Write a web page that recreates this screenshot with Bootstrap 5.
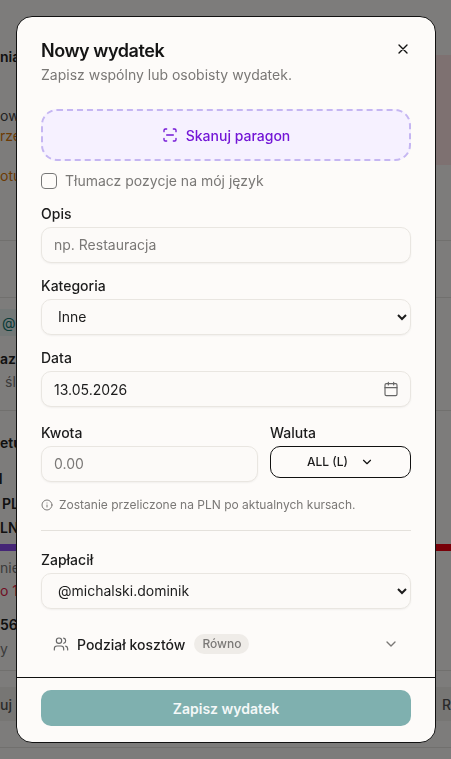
<!DOCTYPE html>
<html lang="pl">
<head>
<meta charset="utf-8">
<title>Nowy wydatek</title>
<link href="https://cdn.jsdelivr.net/npm/bootstrap@5.3.0/dist/css/bootstrap.min.css" rel="stylesheet">
<style>
html,body{height:100%;overflow:hidden}
body{font-family:Inter,"Liberation Sans",sans-serif;background:#fbf9f7;color:#1a1a1a;font-size:14px}
.pg{height:759px;overflow:hidden;font-size:14px;color:#444;background:linear-gradient(#fde3e3,#fde3e3) right 55px/16px 110px no-repeat}
.pg-row{display:flex;justify-content:space-between;align-items:center;white-space:nowrap}
.pg-row span{display:block}
.h-a{height:30px}.h-b{height:20px}.h-c{height:24px}.h-d{height:22px}.h-e{height:16px}
.s3{height:3px}.s4{height:4px}.s5{height:5px}.s6{height:6px}.s7{height:7px}.s10{height:10px}.s12{height:12px}.s14{height:14px}.s17{height:17px}.s20{height:20px}.s21{height:21px}.s26{height:26px}.s34{height:34px}.s41{height:41px}.s55{height:55px}.s57{height:57px}.s11{height:11px}
.edge{border-top:1px solid #e3e0dc}
.pg-orange{color:#d97706}
.pg-gray{color:#777}
.pg-chip{background:#e6f0ef;color:#0f766e;padding:3px 0 3px 2px}
.pg-strong{font-weight:600;color:#222}
.pg-bar{height:7px;background:linear-gradient(90deg,#8a4cec 0 50%,#f00010 50% 100%)}
.pg-red{color:#e11d48}
.pg-btn{background:#efece8;height:34px;font-weight:500;color:#555}
.in-n{margin-left:-8px}
.in-2{margin-left:2px}
.in-5{margin-left:5px}
.modal-backdrop{background:#000;opacity:.5}
.modal-dialog{margin:16px 0 0 16px;width:420px;max-width:420px;height:727px}
.modal-content{height:727px;background:#fdfbf9;border:1px solid #111;border-radius:16px;overflow:hidden}
.modal-header{display:block;border:0;padding:24px 24px 0;position:relative;height:92px;flex:none}
.modal-title{font-size:18px;font-weight:600;line-height:20px;color:#141414;letter-spacing:-.45px}
.nw-sub{font-size:14px;line-height:20px;color:#7a7876;margin-top:4px}
.nw-close{position:absolute;right:24px;top:24px;width:16px;height:16px;padding:0;border:0;background:none;display:flex}
.modal-body{padding:0 24px;overflow:hidden;flex:1}
.nw-scan{height:52px;border:2px dashed #c5b6f2;border-radius:16px;background:#f6f1ff;color:#7316d6;font-weight:500;font-size:14px;width:100%;gap:8px}
.nw-check{display:flex;align-items:center;gap:8px;margin-top:12px;height:16px}
.nw-check .form-check-input{width:16px;height:16px;margin:0;border:1px solid #777;border-radius:4px;background-color:transparent;flex:none}
.nw-check label{color:#7a7876;font-size:14px;line-height:16px}
.nw-label{display:block;font-size:14px;font-weight:500;line-height:14px;color:#1c1c1c;margin:0 0 6px}
.nw-f0{margin-top:18px}
.nw-f{margin-top:16px}
.nw-f2{margin-top:22px}
.nw-in,.nw-sel{height:36px;background-color:#fcfaf8;border:1px solid #e9e6e1;border-radius:10px;box-shadow:0 1px 2px rgba(0,0,0,.05);font-size:14px;color:#1c1c1c;padding:0 12px}
.nw-in::placeholder{color:#7a7876;opacity:1}
.nw-in:placeholder-shown{padding-bottom:1px}
.nw-sel{appearance:auto;-webkit-appearance:auto;background-image:none;padding:0 4px 2px 12px}
.nw-date{position:relative}
.nw-cal{position:absolute;right:12px;top:10px;pointer-events:none}
.nw-grid{display:grid;grid-template-columns:217px 141px;gap:12px;margin-top:18.5px}
.nw-cur{height:32px;width:100%;background:transparent;border:1px solid #111;border-radius:10px;font-size:12px;font-weight:500;color:#1c1c1c;gap:12px;padding:0}
.nw-info{font-size:12px;line-height:16px;color:#7a7876;gap:6px;margin-top:15.5px}
.nw-hr{border:0;border-top:1px solid #e4e1dc;opacity:1;margin:17px 0 0}
.nw-split{height:36px;padding:0 12px;margin-top:17px;font-weight:500;color:#1c1c1c;gap:8px}
.nw-pill{background:#efece8;color:#7a7876;font-size:12px;font-weight:500;line-height:16px;padding:2px 8px;border-radius:10px;margin-left:1px}
.modal-footer{border-top:1px solid #111;padding:12px 24px 16px;display:block;flex:none;height:65px}
.nw-save{display:block;margin:0;width:100%;height:36px;background:#7fb0af;border:0;border-radius:10px;color:#f4f8f8;font-size:14px;font-weight:600;padding:0}
</style>
</head>
<body>
<div class="pg" aria-hidden="true">
  <div class="s41"></div>
  <div class="pg-row h-a pg-strong"><span>nia</span></div>
  <div class="s34"></div>
  <div class="pg-row h-b"><span>ow</span></div>
  <div class="pg-row h-b pg-orange"><span>rze</span></div>
  <div class="s20"></div>
  <div class="pg-row h-b pg-orange"><span>otu</span></div>
  <div class="s55"></div>
  <div class="edge s57"></div>
  <div class="edge s14"></div>
  <div class="pg-row h-d"><span class="pg-chip">@</span></div>
  <div class="s10"></div>
  <div class="pg-row h-a pg-strong"><span>az</span></div>
  <div class="pg-row h-e pg-gray"><span class="in-5">śl</span></div>
  <div class="s21"></div>
  <div class="edge s20"></div>
  <div class="pg-row h-c pg-strong"><span>etu</span></div>
  <div class="s14"></div>
  <div class="pg-row h-b pg-strong"><span class="in-n">N</span></div>
  <div class="s5"></div>
  <div class="pg-row h-b pg-strong"><span class="in-2">PL</span></div>
  <div class="s4"></div>
  <div class="pg-row h-b pg-strong"><span>LN</span></div>
  <div class="s7"></div>
  <div class="pg-bar"></div>
  <div class="s6"></div>
  <div class="pg-row h-b pg-gray"><span>nie</span></div>
  <div class="s3"></div>
  <div class="pg-row h-b pg-red"><span>o 1</span></div>
  <div class="s14"></div>
  <div class="pg-row h-b pg-strong"><span>56</span></div>
  <div class="s4"></div>
  <div class="pg-row h-b pg-gray"><span>y</span></div>
  <div class="s12"></div>
  <div class="edge s17"></div>
  <div class="pg-row pg-btn"><span>uj</span><span>R</span></div>
  <div class="s26"></div>
  <div class="edge s11"></div>
</div>
<div class="modal-backdrop show"></div>
<div class="modal d-block" role="dialog">
  <div class="modal-dialog">
    <div class="modal-content">
      <div class="modal-header">
        <h5 class="modal-title">Nowy wydatek</h5>
        <div class="nw-sub">Zapisz wspólny lub osobisty wydatek.</div>
        <button class="nw-close" type="button" aria-label="Zamknij"><svg width="16" height="16" viewBox="0 0 24 24" fill="none" stroke="#111" stroke-width="2" stroke-linecap="round"><path d="M18 6 6 18M6 6l12 12"/></svg></button>
      </div>
      <div class="modal-body">
        <button type="button" class="nw-scan btn d-flex align-items-center justify-content-center">
          <svg width="16" height="16" viewBox="0 0 24 24" fill="none" stroke="#7316d6" stroke-width="2" stroke-linecap="round" stroke-linejoin="round"><path d="M3 7V5a2 2 0 0 1 2-2h2M17 3h2a2 2 0 0 1 2 2v2M21 17v2a2 2 0 0 1-2 2h-2M7 21H5a2 2 0 0 1-2-2v-2M7 12h10"/></svg>
          Skanuj paragon
        </button>
        <div class="nw-check">
          <input class="form-check-input" type="checkbox" id="tl">
          <label for="tl">Tłumacz pozycje na mój język</label>
        </div>
        <div class="nw-f0">
          <label class="nw-label">Opis</label>
          <input class="form-control nw-in" placeholder="np. Restauracja">
        </div>
        <div class="nw-f">
          <label class="nw-label">Kategoria</label>
          <select class="form-select nw-sel"><option>Inne</option></select>
        </div>
        <div class="nw-f">
          <label class="nw-label">Data</label>
          <div class="nw-date">
            <input class="form-control nw-in" value="13.05.2026">
            <svg class="nw-cal" width="16" height="16" viewBox="0 0 24 24" fill="none" stroke="#666" stroke-width="1.75" stroke-linecap="round" stroke-linejoin="round"><path d="M8 2v4M16 2v4"/><rect x="3" y="4" width="18" height="18" rx="2"/><path d="M3 10h18"/></svg>
          </div>
        </div>
        <div class="nw-grid">
          <div>
            <label class="nw-label">Kwota</label>
            <input class="form-control nw-in" placeholder="0.00">
          </div>
          <div>
            <label class="nw-label">Waluta</label>
            <button type="button" class="nw-cur btn d-flex align-items-center justify-content-center">ALL (L)
              <svg width="14" height="14" viewBox="0 0 24 24" fill="none" stroke="#111" stroke-width="2" stroke-linecap="round" stroke-linejoin="round"><path d="m6 9 6 6 6-6"/></svg>
            </button>
          </div>
        </div>
        <div class="nw-info d-flex align-items-center">
          <svg width="12" height="12" viewBox="0 0 24 24" fill="none" stroke="#7a7876" stroke-width="2" stroke-linecap="round"><circle cx="12" cy="12" r="10"/><path d="M12 16v-4M12 8h.01"/></svg>
          Zostanie przeliczone na PLN po aktualnych kursach.
        </div>
        <hr class="nw-hr">
        <div class="nw-f2">
          <label class="nw-label">Zapłacił</label>
          <select class="form-select nw-sel"><option>@michalski.dominik</option></select>
        </div>
        <div class="nw-split d-flex align-items-center">
          <svg width="16" height="16" viewBox="0 0 24 24" fill="none" stroke="#666" stroke-width="1.75" stroke-linecap="round" stroke-linejoin="round"><path d="M16 21v-2a4 4 0 0 0-4-4H6a4 4 0 0 0-4 4v2"/><circle cx="9" cy="7" r="4"/><path d="M22 21v-2a4 4 0 0 0-3-3.87M16 3.13a4 4 0 0 1 0 7.75"/></svg>
          <span>Podział kosztów</span>
          <span class="nw-pill">Równo</span>
          <svg class="ms-auto" width="16" height="16" viewBox="0 0 24 24" fill="none" stroke="#7a7876" stroke-width="2" stroke-linecap="round" stroke-linejoin="round"><path d="m6 9 6 6 6-6"/></svg>
        </div>
      </div>
      <div class="modal-footer">
        <button type="button" class="nw-save btn">Zapisz wydatek</button>
      </div>
    </div>
  </div>
</div>
<script src="https://cdn.jsdelivr.net/npm/bootstrap@5.3.0/dist/js/bootstrap.bundle.min.js"></script>
</body>
</html>
